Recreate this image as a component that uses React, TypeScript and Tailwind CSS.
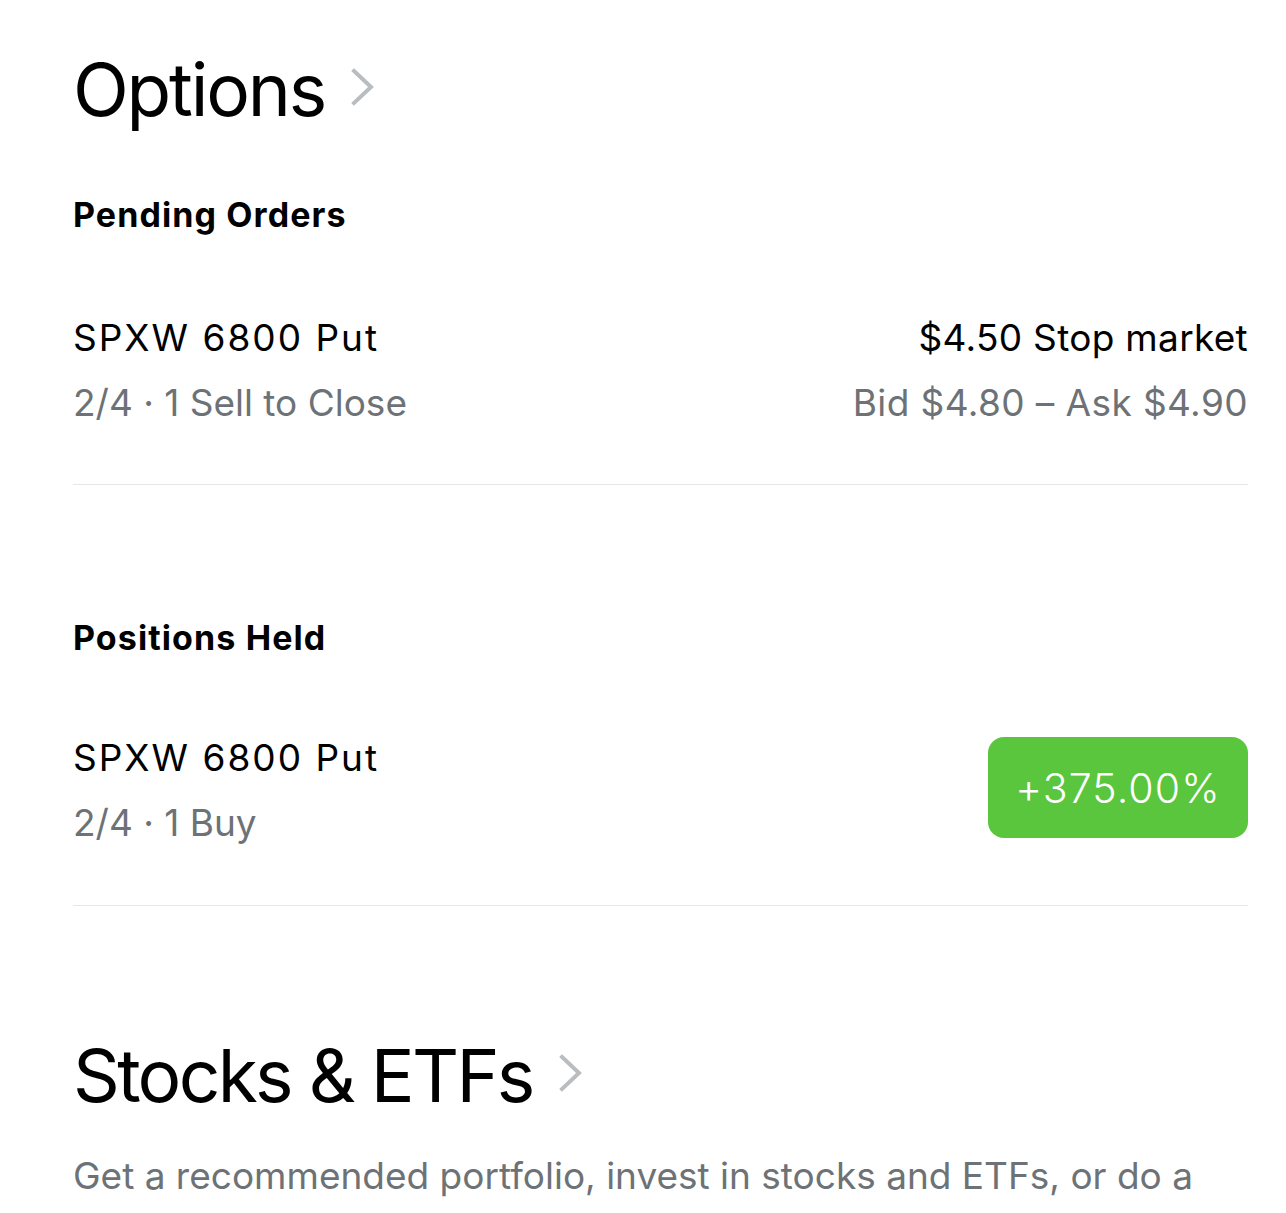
import React from "react";

function Chevron() {
  return (
    <svg width="24" height="38" viewBox="0 0 24 38" fill="none" className="shrink-0">
      <path d="M3 3 L20 19 L3 35" stroke="#babdc0" strokeWidth="4" strokeLinecap="square" strokeLinejoin="miter" />
    </svg>
  );
}

export default function App() {
  return (
    <div
      className="min-h-[1213px] bg-white pl-[73px] pr-[38px] pt-[50px] text-black"
      style={{ fontFamily: "Inter, 'Noto Sans', sans-serif" }}
    >
      <div className="flex items-center gap-[26px]">
        <h1 className="text-[73px] leading-[80px] font-normal tracking-[-2.2px]">Options</h1>
        <div className="mt-[-6px]"><Chevron /></div>
      </div>

      <h2 className="mt-[65px] text-[34px] leading-[40px] font-bold tracking-[1.1px]">Pending Orders</h2>

      <div className="mt-[81px] flex justify-between">
        <div>
          <div className="text-[37px] leading-[44px] tracking-[2px]">SPXW 6800 Put</div>
          <div className="mt-[21px] text-[37px] leading-[44px] text-[#6d7277]">2/4 · 1 Sell to Close</div>
        </div>
        <div className="text-right">
          <div className="text-[37px] leading-[44px] tracking-[0.3px]">$4.50 Stop market</div>
          <div className="mt-[21px] text-[37px] leading-[44px] tracking-[0.4px] text-[#6d7277]">Bid $4.80 – Ask $4.90</div>
        </div>
      </div>

      <div className="mt-[59px] h-px bg-[#e6e7e8]" />

      <h2 className="mt-[133px] text-[34px] leading-[40px] font-bold tracking-[1.1px]">Positions Held</h2>

      <div className="mt-[78px] flex items-start justify-between">
        <div>
          <div className="text-[37px] leading-[44px] tracking-[2px]">SPXW 6800 Put</div>
          <div className="mt-[21px] text-[37px] leading-[44px] text-[#6d7277]">2/4 · 1 Buy</div>
        </div>
        <div className="mt-px flex h-[101px] w-[260px] items-center justify-center rounded-[16px] bg-[#5ac63e] pt-[2px] text-[41px] font-light tracking-[1.1px] text-white">
          +375.00%
        </div>
      </div>

      <div className="mt-[60px] h-px bg-[#e6e7e8]" />

      <div className="mt-[130px] flex items-center gap-[26px]">
        <h1 className="text-[73px] leading-[80px] font-normal tracking-[-2.7px] whitespace-nowrap">Stocks &amp; ETFs</h1>
        <div className="mt-[-6px]"><Chevron /></div>
      </div>

      <p className="mt-[38px] text-[37px] leading-[44px] text-[#6d7277] whitespace-nowrap">
        Get a recommended portfolio, invest in stocks and ETFs, or do a
      </p>
    </div>
  );
}
